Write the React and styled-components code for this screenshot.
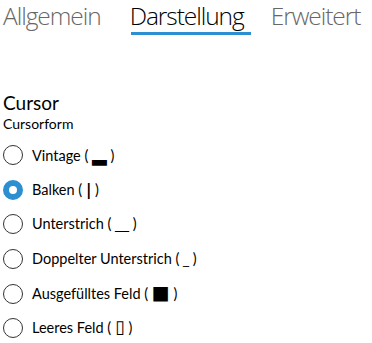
import React from "react";
import styled, { createGlobalStyle } from "styled-components";

const Global = createGlobalStyle`
  html, body { margin: 0; padding: 0; background: #fff; }
  body { font-family: "Segoe UI", Lato, "Open Sans", sans-serif; color: #000; }
`;

const Page = styled.div`
  width: 372px;
  height: 343px;
  overflow: hidden;
  background: #fff;
`;

const Tabs = styled.div`
  display: flex;
  align-items: flex-start;
  padding-left: 3px;
`;

const Tab = styled.div`
  font-family: "Segoe UI", "Open Sans", sans-serif;
  font-weight: 300;
  font-size: 24.5px;
  letter-spacing: -1.05px;
  line-height: 32px;
  color: ${(p) => (p.$active ? "#000" : "#676767")};
  margin-right: ${(p) => p.$gap}px;
  display: flex;
  flex-direction: column;
  align-items: flex-start;
  white-space: nowrap;
`;

const Underline = styled.div`
  height: 3px;
  width: calc(100% + 6px);
  margin-left: 1px;
  background: ${(p) => (p.$show ? "#2b8fd1" : "transparent")};
`;

const Section = styled.div`
  padding: 56px 0 0 3px;
`;

const Heading = styled.div`
  font-size: 19px;
  line-height: 24px;
  font-weight: 400;
`;

const Sub = styled.div`
  font-size: 14px;
  line-height: 18px;
  margin-bottom: 5px;
`;

const Row = styled.label`
  display: flex;
  align-items: center;
  height: 34.6px;
  font-size: 14.5px;
  line-height: 20px;
`;

const Radio = styled.span`
  box-sizing: border-box;
  width: 20px;
  height: 20px;
  border-radius: 50%;
  border: ${(p) => (p.$checked ? "6px solid #2b8fd1" : "1px solid #333")};
  background: #fff;
  margin-right: 9px;
  flex-shrink: 0;
`;

const Glyph = styled.span`
  font-family: "DejaVu Sans", sans-serif;
  font-size: ${(p) => p.$size || 14}px;
  font-weight: ${(p) => p.$weight || 400};
  line-height: 1;
`;

const options = [
  { label: "Vintage", glyph: "▂", size: 19 },
  { label: "Balken", glyph: "|", checked: true, size: 15, weight: 700 },
  { label: "Unterstrich", glyph: "__", size: 14 },
  { label: "Doppelter Unterstrich", glyph: "_", size: 12 },
  { label: "Ausgefülltes Feld", glyph: "■", size: 19 },
  { label: "Leeres Feld", glyph: "▯", size: 18 },
];

export default function App() {
  return (
    <Page>
      <Global />
      <Tabs>
        <Tab $gap={29}>Allgemein<Underline /></Tab>
        <Tab $active $gap={27}>Darstellung<Underline $show /></Tab>
        <Tab>Erweitert<Underline /></Tab>
      </Tabs>
      <Section>
        <Heading>Cursor</Heading>
        <Sub>Cursorform</Sub>
        {options.map((o) => (
          <Row key={o.label}>
            <Radio $checked={o.checked} />
            <span>
              {o.label} ( <Glyph $size={o.size} $weight={o.weight}>{o.glyph}</Glyph> )
            </span>
          </Row>
        ))}
      </Section>
    </Page>
  );
}
